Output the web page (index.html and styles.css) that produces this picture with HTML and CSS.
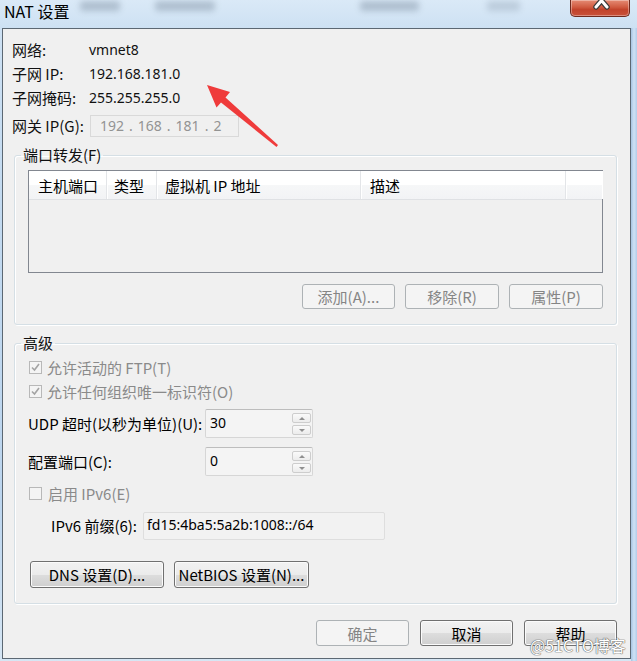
FILE: index.html
```html
<!DOCTYPE html>
<html>
<head>
<meta charset="utf-8">
<link rel="stylesheet" href="styles.css">
</head>
<body>
<div class="window">
  <div class="titlebar">
    <span class="title">NAT 设置</span>
    <span class="ghost gh1"></span>
    <span class="ghost gh2"></span>
    <span class="ghost gh3"></span>
    <span class="ghost gh4"></span>
    <div class="close">
      <svg width="58" height="16" viewBox="0 0 58 16">
        <path d="M25 -6 L36 7 M36 -6 L25 7" stroke="#3a3a3a" stroke-width="5.5" stroke-linecap="round" fill="none"/>
        <path d="M25 -6 L36 7 M36 -6 L25 7" stroke="#ffffff" stroke-width="3" stroke-linecap="round" fill="none"/>
      </svg>
    </div>
  </div>
  <div class="main">
    <div class="client">
      <div class="info">
        <span class="lbl">网络:</span><span class="val">vmnet8</span>
        <span class="lbl">子网 IP:</span><span class="val">192.168.181.0</span>
        <span class="lbl">子网掩码:</span><span class="val">255.255.255.0</span>
        <span class="lbl gw">网关 IP(G):</span>
        <span class="ipbox"><span>192</span><span>.</span><span>168</span><span>.</span><span>181</span><span>.</span><span>2</span></span>
      </div>

      <fieldset class="group g-port">
        <legend>端口转发(F)</legend>
        <div class="listview">
          <div class="lv-head">
            <div class="col c1">主机端口</div>
            <div class="col c2">类型</div>
            <div class="col c3">虚拟机 IP 地址</div>
            <div class="col c4">描述</div>
            <div class="col c5"></div>
          </div>
        </div>
        <div class="btnrow">
          <button class="btn b-add" disabled>添加(A)...</button>
          <button class="btn b-rm" disabled>移除(R)</button>
          <button class="btn b-rm" disabled>属性(P)</button>
        </div>
      </fieldset>

      <fieldset class="group g-adv">
        <legend>高级</legend>
        <div class="cb-row disabled">
          <span class="cb"><svg width="11" height="11" viewBox="0 0 11 11"><path d="M2 5.5 L4.5 8 L9 2" stroke="#a3a3a3" stroke-width="1.6" fill="none"/></svg></span>
          <span>允许活动的 FTP(T)</span>
        </div>
        <div class="cb-row disabled">
          <span class="cb"><svg width="11" height="11" viewBox="0 0 11 11"><path d="M2 5.5 L4.5 8 L9 2" stroke="#a3a3a3" stroke-width="1.6" fill="none"/></svg></span>
          <span>允许任何组织唯一标识符(O)</span>
        </div>
        <div class="spin-row r-udp">
          <span class="spin-lbl">UDP 超时(以秒为单位)(U):</span>
          <div class="spin">
            <span class="spin-val">30</span>
            <div class="spin-btns"><span class="sb up"></span><span class="sb down"></span></div>
          </div>
        </div>
        <div class="spin-row r-cfg">
          <span class="spin-lbl">配置端口(C):</span>
          <div class="spin">
            <span class="spin-val">0</span>
            <div class="spin-btns"><span class="sb up"></span><span class="sb down"></span></div>
          </div>
        </div>
        <div class="cb-row disabled r-ipv6">
          <span class="cb"></span>
          <span>启用 IPv6(E)</span>
        </div>
        <div class="prefix-row">
          <span class="prefix-lbl">IPv6 前缀(6):</span>
          <span class="prefix-box">fd15:4ba5:5a2b:1008::/64</span>
        </div>
        <div class="dns-row">
          <button class="btn b-dns">DNS 设置(D)...</button>
          <button class="btn b-nb">NetBIOS 设置(N)...</button>
        </div>
      </fieldset>

      <div class="footer">
        <button class="btn b-foot" disabled>确定</button>
        <button class="btn b-foot">取消</button>
        <button class="btn b-foot">帮助</button>
      </div>
    </div>
    <div class="frame-right"></div>
  </div>

  <svg class="arrow" width="637" height="661" viewBox="0 0 637 661">
    <polygon points="207,85 230,92 225.5,97.5 278,145 276.5,147 221,102.5 216.5,107.5" fill="#ef3b3b"/>
  </svg>
  <div class="watermark">@51CTO博客</div>
</div>
</body>
</html>
```

FILE: styles.css
```css
* { box-sizing: border-box; }
html, body { margin: 0; padding: 0; }
body {
  width: 637px;
  height: 661px;
  overflow: hidden;
  font-family: "Noto Sans CJK SC", "Noto Sans", sans-serif;
  font-size: 15px;
  color: #111;
  background: #dce9f5;
}
.window {
  position: relative;
  width: 637px;
  height: 661px;
  background: linear-gradient(#cfe2f4, #c3daf0 200px, #bcd5ee 500px, #d6e6f4);
}

/* title bar */
.titlebar {
  height: 28px;
  display: flex;
  align-items: flex-start;
  background: linear-gradient(#dae9f7, #cde1f3);
}
.title {
  width: 76px;
  margin-left: 4px;
  font-size: 16px;
  line-height: 20px;
  margin-top: 1px;
  color: #000;
  white-space: nowrap;
}
.ghost {
  height: 10px;
  margin-top: 1px;
  background: #7d8ea0;
  opacity: .45;
  filter: blur(3px);
  border-radius: 3px;
}
.gh1 { width: 40px; }
.gh2 { width: 60px; margin-left: 35px; }
.gh3 { width: 59px; margin-left: 145px; }
.gh4 { width: 33px; margin-left: 68px; opacity: .3; }
.close {
  width: 60px;
  height: 17px;
  margin-left: 50px;
  border: 1px solid #6e2a1e;
  border-top: none;
  border-radius: 0 0 5px 5px;
  background: linear-gradient(#e58b74, #d05a40 45%, #c2432b 60%, #c9523a);
  box-shadow: inset 0 0 0 1px rgba(255, 255, 255, .35);
  overflow: hidden;
}
.close svg { display: block; }

/* main frame */
.main { display: flex; height: 633px; }
.client {
  margin-left: 2px;
  width: 629px;
  height: 631px;
  background: #f0f0f0;
  border: 1px solid #5c6873;
  padding-top: 9px;
}
.frame-right {
  width: 6px;
  height: 633px;
  background: linear-gradient(90deg, #a6c4e2, #cfe2f5 50%, #b2cde9);
}

/* info grid */
.info {
  margin-left: 9px;
  display: grid;
  grid-template-columns: 77px auto;
  grid-template-rows: 24px 24px 24px 29px;
  align-items: center;
  color: #111;
}
.lbl, .val { line-height: 20px; white-space: nowrap; }
.val { font-family: "Noto Sans", "Noto Sans CJK SC", sans-serif; font-size: 14px; }
.gw { align-self: start; margin-top: 3px; height: 26px; line-height: 26px; }
.ipbox {
  align-self: start;
  margin-top: 5px;
  margin-left: 1px;
  width: 149px;
  height: 22px;
  border: 1px solid #d9d9d9;
  background: #f0f0f0;
  display: flex;
  align-items: center;
  gap: 5px;
  padding-left: 9px;
  font-family: "Noto Sans", sans-serif;
  font-size: 14px;
  color: #939393;
  line-height: 20px;
}

/* group boxes */
.group {
  margin: 0 13px 0 11px;
  border: 1px solid #d5dfe5;
  border-radius: 3px;
  box-shadow: inset 1px 1px 0 #fff, 1px 1px 0 #fff;
  min-inline-size: 0;
}
.group legend {
  padding: 0 2px;
  margin-left: -7px;
  line-height: 20px;
  color: #111;
}
.g-port {
  margin-top: 6px;
  padding: 5px 13px 15px 13px;
}
.g-adv {
  margin-top: 8px;
  padding: 2px 13px 15px 13px;
}

/* list view */
.listview {
  height: 103px;
  border: 1px solid #828790;
  background: #f0f0f0;
}
.lv-head {
  display: flex;
  height: 29px;
  background: linear-gradient(#ffffff, #ffffff 50%, #f6f7f8 51%, #f2f3f5);
  border-bottom: 1px solid #dfe1e4;
}
.col {
  padding-left: 8px;
  line-height: 30px;
  border-right: 1px solid #e3e5e8;
  box-shadow: 1px 0 0 #fff;
  white-space: nowrap;
  color: #000;
}
.c1 { width: 78px; padding-left: 9px; }
.c2 { width: 50px; padding-left: 7px; }
.c3 { width: 204px; }
.c4 { width: 205px; padding-left: 9px; }
.c5 { flex: 1; border-right: none; }

.btnrow {
  margin-top: 11px;
  display: flex;
  justify-content: flex-end;
  gap: 10px;
}

/* buttons */
.btn {
  font: inherit;
  height: 25px;
  padding: 0;
  line-height: 21px;
  border: 1px solid #707070;
  border-radius: 3px;
  background: linear-gradient(#f2f2f2, #ebebeb 50%, #dddddd 51%, #cfcfcf);
  box-shadow: inset 0 0 0 1px #fbfbfb;
  color: #000;
  white-space: nowrap;
}
.btn:disabled {
  border-color: #adb2b5;
  background: #f4f4f4;
  box-shadow: none;
  color: #858585;
}
.b-add { width: 93px; }
.b-rm { width: 94px; }

/* advanced */
.cb-row {
  display: flex;
  align-items: center;
  height: 24px;
  gap: 5px;
  padding-left: 1px;
}
.cb-row.disabled { color: #8a8a8a; }
.cb {
  width: 13px;
  height: 13px;
  border: 1px solid #b8b8b8;
  background: #f4f4f4;
  display: flex;
  align-items: center;
  justify-content: center;
}
.cb svg { display: block; }
.r-ipv6 { margin-top: 5px; gap: 6px; }

.spin-row {
  display: grid;
  grid-template-columns: 177px 108px;
  align-items: center;
  height: 29px;
  color: #000;
}
.r-udp { margin-top: 6px; }
.r-cfg { margin-top: 9px; }
.spin-lbl { line-height: 20px; white-space: nowrap; }
.spin {
  width: 108px;
  height: 29px;
  border: 1px solid #d6d6d6;
  border-top-color: #bdbdbd;
  border-radius: 2px;
  background: #f4f4f4;
  display: flex;
  justify-content: space-between;
  padding: 2px 1px 2px 4px;
}
.spin-val {
  line-height: 22px;
  font-family: "Noto Sans", sans-serif;
  font-size: 14px;
  color: #000;
}
.spin-btns {
  width: 19px;
  display: flex;
  flex-direction: column;
  gap: 2px;
  padding-top: 1px;
}
.sb {
  height: 11px;
  border: 1px solid #cdcdcd;
  border-radius: 2px;
  background: linear-gradient(#fafafa, #ececec);
  display: flex;
  align-items: center;
  justify-content: center;
}
.sb::after {
  content: "";
  width: 0;
  height: 0;
  border-left: 3px solid transparent;
  border-right: 3px solid transparent;
}
.up::after { border-bottom: 3px solid #8f8f8f; }
.down::after { border-top: 3px solid #8f8f8f; }

.prefix-row {
  margin-top: 7px;
  margin-left: 23px;
  display: flex;
  align-items: center;
  height: 28px;
  color: #000;
}
.prefix-lbl { width: 92px; line-height: 20px; white-space: nowrap; }
.prefix-box {
  width: 242px;
  height: 28px;
  border: 1px solid #dedede;
  border-radius: 2px;
  background: #f2f2f2;
  padding-left: 3px;
  line-height: 24px;
  font-family: "Noto Sans", sans-serif;
  font-size: 14px;
  color: #000;
}

.dns-row {
  margin-top: 21px;
  margin-left: 2px;
  display: flex;
  gap: 10px;
}
.b-dns { width: 134px; height: 27px; }
.b-nb { width: 135px; height: 27px; }

.footer {
  margin-top: 16px;
  padding-right: 13px;
  display: flex;
  justify-content: flex-end;
  gap: 11px;
}
.b-foot { width: 93px; height: 26px; }

/* overlays */
.arrow { position: absolute; left: 0; top: 0; pointer-events: none; }
.watermark {
  position: absolute;
  left: 530px;
  top: 635px;
  font-size: 16px;
  line-height: 20px;
  color: #fff;
  white-space: nowrap;
  text-shadow: 0 0 1px #666, 0 0 1px #666, 0 0 1px #666;
}
```
